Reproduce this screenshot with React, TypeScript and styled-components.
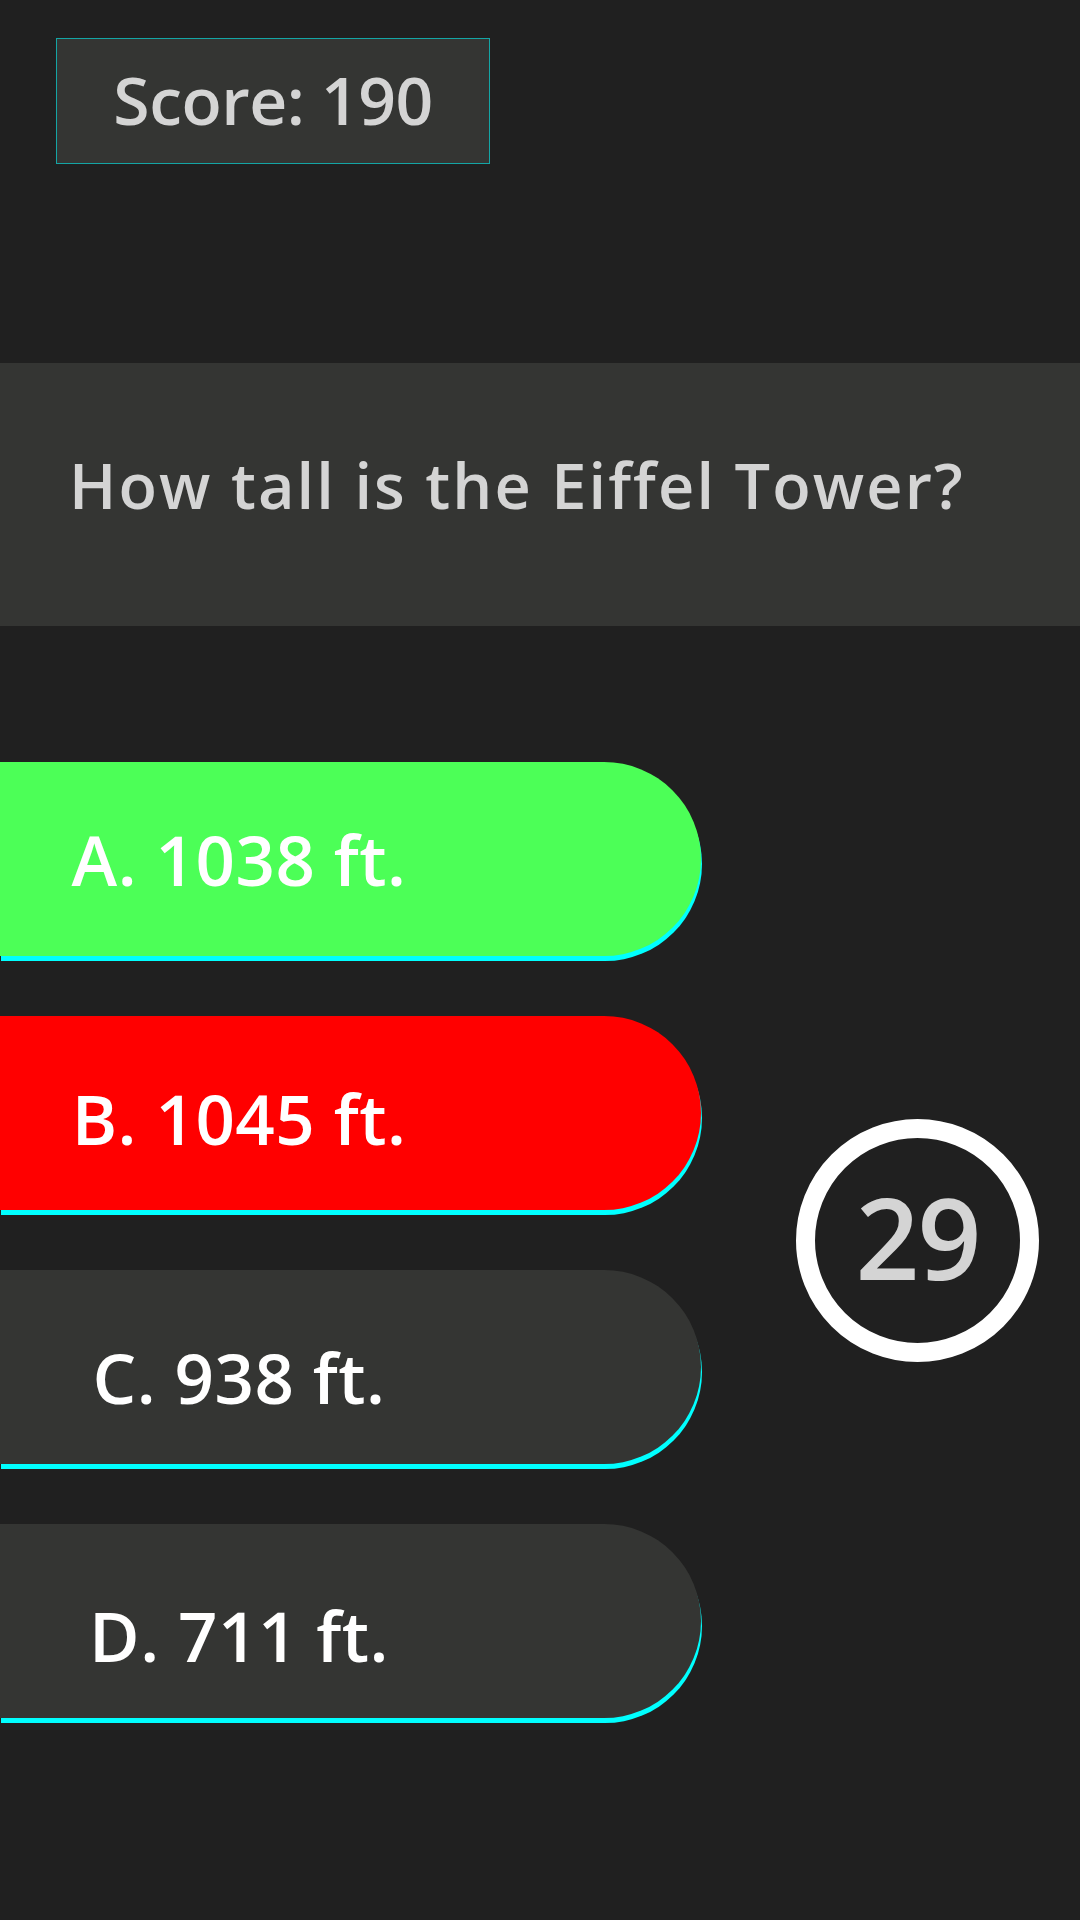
import React from "react";
import styled, { createGlobalStyle } from "styled-components";

const Global = createGlobalStyle`
  html, body { margin: 0; padding: 0; background: #202020; }
  body { font-family: "Open Sans", "Noto Sans", sans-serif; }
`;

const Page = styled.div`
  width: 1080px;
  height: 1920px;
  background: #202020;
  display: flex;
  flex-direction: column;
  overflow: hidden;
`;

const Header = styled.header`
  padding: 38px 0 0 56px;
`;

const ScoreBox = styled.div`
  box-sizing: border-box;
  width: 434px;
  height: 126px;
  border: 1px solid #14a5a5;
  background: #343533;
  color: #d4d4d4;
  display: flex;
  align-items: center;
  justify-content: center;
  padding-bottom: 4px;
  font-size: 66px;
  font-weight: 600;
  letter-spacing: -0.5px;
`;

const QuestionBar = styled.section`
  margin-top: 199px;
  height: 263px;
  background: #343533;
  display: flex;
  align-items: center;
  padding-left: 69px;
  padding-bottom: 20px;
  box-sizing: border-box;
  color: #d4d4d4;
  font-size: 63px;
  font-weight: 600;
  letter-spacing: 2.1px;
`;

const Main = styled.main`
  margin-top: 136px;
  display: flex;
  align-items: center;
`;

const Answers = styled.div`
  width: 701px;
  display: flex;
  flex-direction: column;
  gap: 60px;
`;

const Answer = styled.div<{ $bg: string; $shift: number }>`
  box-sizing: border-box;
  height: 194px;
  background: ${(p) => p.$bg};
  border-radius: 0 97px 97px 0;
  box-shadow: 1px 5px 0 #00ffff;
  display: flex;
  align-items: center;
  justify-content: center;
  padding-right: 223px;
  padding-top: ${(p) => p.$shift}px;
  color: #ffffff;
  font-size: 69px;
  font-weight: 600;
  letter-spacing: 0.5px;
`;

const Timer = styled.div`
  margin-left: 95px;
  box-sizing: border-box;
  width: 243px;
  height: 243px;
  border-radius: 50%;
  border: 19px solid #ffffff;
  display: flex;
  align-items: center;
  justify-content: center;
  color: #d4d4d4;
  font-size: 112px;
  font-weight: 600;
  letter-spacing: -2px;
  padding-bottom: 8px;
`;

const answers = [
  { text: "A. 1038 ft.", bg: "#4cff57", shift: 0 },
  { text: "B. 1045 ft.", bg: "#ff0000", shift: 10 },
  { text: "C. 938 ft.", bg: "#343533", shift: 20 },
  { text: "D. 711 ft.", bg: "#343533", shift: 28 },
];

export default function App() {
  return (
    <Page>
      <Global />
      <Header>
        <ScoreBox>Score: 190</ScoreBox>
      </Header>
      <QuestionBar>How tall is the Eiffel Tower?</QuestionBar>
      <Main>
        <Answers>
          {answers.map((a) => (
            <Answer key={a.text} $bg={a.bg} $shift={a.shift}>
              {a.text}
            </Answer>
          ))}
        </Answers>
        <Timer>29</Timer>
      </Main>
    </Page>
  );
}
